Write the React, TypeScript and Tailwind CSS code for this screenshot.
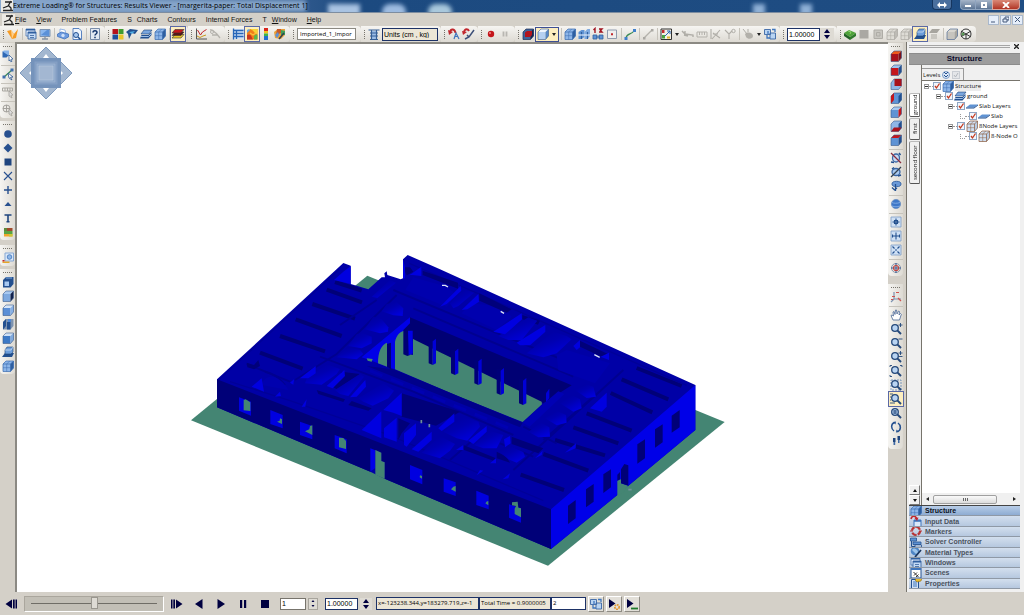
import type { ReactNode } from 'react';
import clsx from 'clsx';

/* ---------- Icons, all drawn on a 14 x 14 grid ---------- */

type Faces = { top?: string; front?: string; side?: string };

function Svg({ children }: { children: ReactNode }) {
  return (
    <svg viewBox="0 0 14 14" className="block h-[14px] w-[14px] shrink-0" fill="none" aria-hidden="true">
      {children}
    </svg>
  );
}

function Cube({ top = '#a9c9f0', front = '#5f93d4', side = '#23508f' }: Faces) {
  return (
    <Svg>
      <path d="M2 5 5 2h7.500L9.500 5z" fill={top} />
      <path d="M2 5h7.500v7.500H2z" fill={front} />
      <path d="M9.500 5l3-3v7l-3 3.500z" fill={side} />
      <path d="M2 5 5 2h7.500v7l-3 3.500H2z" stroke="#3a5a8c" strokeWidth=".6" />
    </Svg>
  );
}

function Wire({ color = '#3a6bb0', fill = '#bcd5f3', shade = '#2f5f9f' }: { color?: string; fill?: string; shade?: string }) {
  return (
    <Svg>
      <path d="M2 5 5 2h7.500v7l-3 3.500H2z" fill={fill} />
      <path d="M9.500 5l3-3v7l-3 3.500z" fill={shade} />
      <path d="M2 5 5 2h7.500v7l-3 3.500H2zM2 5h7.500v7.500M9.500 5l3-3" stroke={color} strokeWidth=".7" />
      <path d="M5.700 5v7.500M2 8.700h7.500M5.700 5l3-3" stroke={color} strokeWidth=".5" />
    </Svg>
  );
}

function Zoom({ mark, frame = false }: { mark?: string; frame?: boolean }) {
  return (
    <Svg>
      {frame && <path d="M2 2h10v10H2z" stroke="#5f86b5" strokeWidth=".8" strokeDasharray="2 1" />}
      <circle cx="6" cy="6" r="3.300" fill="#b9d4f2" stroke="#24487a" strokeWidth="1.300" />
      <path d="m8.600 8.600 3.400 3.400" stroke="#24487a" strokeWidth="2" />
      {mark && <path d={mark} stroke="#24487a" strokeWidth=".9" />}
    </Svg>
  );
}

function Target({ d }: { d: string }) {
  return (
    <Svg>
      <path d="M2 2h10v10H2z" fill="#cfe0f4" stroke="#7b9cc7" strokeWidth=".8" />
      <path d={d} stroke="#23508f" strokeWidth="1.100" />
    </Svg>
  );
}

const icons: Record<string, ReactNode> = {
  app: (
    <Svg>
      <path d="M0 1h13v12H0z" fill="#eceae5" />
      <path d="M2 11.500h10M2 9l5-2 3-5M4 3h7M7 6l3 3v3" stroke="#222" strokeWidth="1.300" />
    </Svg>
  ),
  open: (
    <Svg>
      <path d="m1 4 4-1 3 4 4-5-2 9-4 1z" fill="#f59a23" />
      <path d="m5 3 3 4-2 5z" fill="#ffd08a" />
    </Svg>
  ),
  windows: (
    <Svg>
      <path d="M2 2h9v7H2z" fill="#dfeafa" stroke="#4a76b3" strokeWidth=".8" />
      <path d="M4 5h8v7H4z" fill="#c3daf5" stroke="#2b5a9b" strokeWidth=".8" />
      <path d="M4 5h8v1.500H4zM2 2h9v1.500H2z" fill="#2f5f9f" />
      <path d="M6 8.500h4M6 10.500h4" stroke="#23508f" strokeWidth=".7" />
    </Svg>
  ),
  monitor: (
    <Svg>
      <path d="M2 2.500h10v7H2z" fill="#8bb7ee" stroke="#7d93b0" />
      <path d="m3 8 6-5h2v6z" fill="#5b91d8" />
      <path d="M4 12h6M7 9.500V12" stroke="#8592a3" strokeWidth="1.300" />
    </Svg>
  ),
  print: (
    <Svg>
      <path d="m4 2 5 1 1 4-6-1z" fill="#fff" stroke="#6d9be0" strokeWidth=".7" />
      <path d="m1.500 7 4-2 7 2v3l-4 2-7-2.500z" fill="#6d9be0" stroke="#3568b5" strokeWidth=".7" />
      <circle cx="7" cy="8.500" r="1.700" fill="#cfe0f8" />
    </Svg>
  ),
  preview: (
    <Svg>
      <path d="M3 1.500h6l2.500 2.500v8.500H3z" fill="#eef4fc" stroke="#3568b5" strokeWidth=".8" />
      <circle cx="6" cy="8" r="2.500" fill="#a9c9f0" stroke="#23508f" />
      <path d="m8 10 2.500 2.500" stroke="#23508f" strokeWidth="1.500" />
    </Svg>
  ),
  help: (
    <Svg>
      <path d="M2.500 1.500h9v11h-9z" fill="#e3e9f2" stroke="#5c7398" strokeWidth=".8" />
      <path d="M5 5.500C5 3 9 3 9 5.500c0 1.500-2 1.500-2 3M7 9.700v1.500" stroke="#14346b" strokeWidth="1.500" />
    </Svg>
  ),
  blocks: (
    <Svg>
      <path d="M1.500 2H7v5H1.500z" fill="#b5121b" />
      <path d="M7.500 2h5v5h-5z" fill="#3f9b2f" />
      <path d="M1.500 7.500H7v5H1.500z" fill="#1d4f9e" />
      <path d="M7.500 7.500h5v5h-5z" fill="#e9c52b" />
    </Svg>
  ),
  mesh: (
    <Svg>
      <path d="m1 5 4-3 8 1-3 4-3-1-3 6-1-5z" fill="#23508f" />
      <path d="m4 5 6-1-3 3z" fill="#4faee6" />
    </Svg>
  ),
  slabs: (
    <Svg>
      <path d="M1 11.500 2.500 8h7l3-3v3l-3 3.500z" fill="#23508f" />
      <path d="m2 7 3-4h8l-3 4z" fill="#7aa6de" stroke="#1d3f73" strokeWidth=".6" />
      <path d="M2 9.500h7.500l3-3" stroke="#a9c9f0" strokeWidth=".9" />
    </Svg>
  ),
  layers: (
    <Svg>
      <path d="m1 11 3-3.500h9L10 11z" fill="#e9c52b" stroke="#333" strokeWidth=".6" />
      <path d="m1 8.500 3-3.500h9l-3 3.500z" fill="#5a1416" stroke="#333" strokeWidth=".6" />
      <path d="m1 6 3-3.500h9L10 6z" fill="#c4161c" stroke="#333" strokeWidth=".6" />
    </Svg>
  ),
  chart: (
    <Svg>
      <path d="M2.500 1.500V12H13" stroke="#555" />
      <path d="m3.500 3 3 5 2-3 4-2.500" stroke="#c1272d" />
      <path d="m3 9 3 1.500L9 9l3-1" stroke="#c99a1e" />
    </Svg>
  ),
  grayCurve: (
    <Svg>
      <path d="M2 3c4-1 4 3 6 3M4 8h6M8 6l4 5" stroke="#b4b2ac" strokeWidth="1.300" />
      <circle cx="4" cy="5" r="1.500" stroke="#b4b2ac" />
    </Svg>
  ),
  grid: (
    <Svg>
      <path d="M3 2h10v10H3z" fill="#cfe0f4" />
      <path d="M2.500 1.500v11M2 3.500h10.500M2 6.500h10.500M2 9.500h10.500M5.500 3v9" stroke="#2766b8" strokeWidth="1.300" />
    </Svg>
  ),
  contour: (
    <Svg>
      <path d="M2 5l3-3h7.500v10.500H2z" fill="#f07d1a" />
      <path d="M5 2h7.500v5C9 7 10 4 5 2z" fill="#f7d435" />
      <path d="M2 8c4-2 4.500 2 6 4.500H2z" fill="#c8381f" />
      <path d="M9 9.500c1-2 2-2 3.500-2v5H9z" fill="#58b84a" />
      <path d="M2 3l2-1 1 1-3 3z" fill="#62a8e6" />
      <path d="m5 6 3 2 3-2" stroke="#f9c23a" strokeWidth="1.200" />
    </Svg>
  ),
  legend: (
    <Svg>
      <path d="M5 1h4v3H5z" fill="#d9261c" />
      <path d="M5 4h4v2.500H5z" fill="#f2c21a" />
      <path d="M5 6.500h4V9H5z" fill="#3bb54a" />
      <path d="M5 9h4v4H5z" fill="#1f6fd0" />
    </Svg>
  ),
  contourEdit: (
    <Svg>
      <path d="m1 5 4-3 7 0v6l-4 4-6-1z" fill="#e8a13a" />
      <path d="M4 2h4v4L3 8z" fill="#c65a2a" />
      <path d="m8 3 4 1v4L8 8z" fill="#42a05a" />
      <path d="M2 8l3-3 1 3-2 3z" fill="#5b91d8" />
      <path d="m6 12 5-6" stroke="#33414f" strokeWidth="1.500" />
    </Svg>
  ),
  table: (
    <Svg>
      <path d="M4 4h6v8H4z" fill="#9dbfe8" />
      <path d="M1.500 3h11M3 6h8M3 9h8M4.500 3v9.500M9.500 3v9.500M3 12.500h8" stroke="#355f96" strokeWidth="1.200" />
    </Svg>
  ),
  undoMark: (
    <Svg>
      <path d="M3 5c1-4 5-3 5.500 1" stroke="#c1272d" strokeWidth="2" />
      <path d="m1 3 1 5 4-3z" fill="#c1272d" />
      <path d="m7 12 2-6 3 6M8 9.500h3" stroke="#3f76bd" strokeWidth="1.200" />
    </Svg>
  ),
  undoLine: (
    <Svg>
      <path d="M3 5c1-4 4-3 5-1" stroke="#c1272d" strokeWidth="2" />
      <path d="m4 12 4-2 5-7M6 8l2 2" stroke="#3c4f78" strokeWidth="1.500" />
      <path d="m1 4 1 4 4-3z" fill="#c1272d" />
    </Svg>
  ),
  record: (
    <Svg>
      <circle cx="7" cy="7" r="3.200" fill="#c4161c" />
      <circle cx="6" cy="6" r="1" fill="#ef8a8d" />
    </Svg>
  ),
  pauseGray: (
    <Svg>
      <path d="M5.500 4.500v5M8.500 4.500v5" stroke="#b8b6b1" strokeWidth="1.800" />
    </Svg>
  ),
  redCube: (
    <Svg>
      <path d="M2 5 5 2h7.500v7l-3 3.500H2z" fill="#3f659b" />
      <path d="M9.500 5l3-3v7l-3 3.500z" fill="#16264c" />
      <path d="M4 5.500 6 4h5v4L9 10H4z" fill="#b3141c" />
      <path d="M2 5 5 2h7.500v7l-3 3.500H2z" stroke="#1d2f56" strokeWidth=".7" />
    </Svg>
  ),
  cubeLight: <Cube top="#eef5fd" front="#b5d0f1" side="#5687c6" />,
  cubeGrid: <Wire fill="#8db6e9" />,
  cubeSplit: (
    <Svg>
      <path d="m1.500 5 3-2h3v7l-3 2h-3z" fill="#5f93d4" />
      <path d="m7.500 5 3-3h2.500v7l-2.500 3h-3z" fill="#7faae0" />
      <path d="M4.500 5v7M10.500 5v7" stroke="#2f5f9f" strokeWidth="1.200" />
      <path d="M1 8h12" stroke="#dbe8f8" strokeWidth="1.200" />
    </Svg>
  ),
  numbers: (
    <Svg>
      <path d="m2.500 3 1.500-1.500V6M8 2h3L9.500 3.500 11 5H8" stroke="#a11520" strokeWidth="1.400" />
      <path d="M2 8h4v4H2zM8 8h4v4H8z" fill="#5f93d4" stroke="#2f5f9f" strokeWidth=".8" />
      <path d="M5 10h4" stroke="#2f5f9f" />
    </Svg>
  ),
  dotFrame: (
    <Svg>
      <path d="M2.500 3h9v8.500h-9z" fill="#eee" stroke="#8592a8" strokeWidth=".9" />
      <path d="M6 6.200h2v2H6z" fill="#c1272d" />
    </Svg>
  ),
  line: (
    <Svg>
      <path d="M3 11c1-5 5-3 8-7" stroke="#3a8a55" strokeWidth="1.200" />
      <path d="M1.500 10h3v3h-3zM10 2h3v3h-3z" fill="#3f7fcb" />
    </Svg>
  ),
  lineGray: (
    <Svg>
      <path d="m3 11 8-8" stroke="#b4b2ac" strokeWidth="1.200" />
      <path d="M2 10h2.500v2.500H2zM10 2h2.500v2.500H10z" fill="#aaa8a3" />
    </Svg>
  ),
  select: (
    <Svg>
      <path d="M2 2h10.500v10.500H2z" fill="#f2efe4" stroke="#333" strokeWidth="1" />
      <path d="m6 9 5-5M8 4h3v3" stroke="#2464b5" />
      <path d="M3 3h2.500v3H3z" fill="#c1272d" />
      <path d="M3 8h3v3.500H3z" fill="#4aa23e" />
      <path d="M8 9.500h3v2H8z" fill="#e2b52b" />
    </Svg>
  ),
  grayBeam: (
    <Svg>
      <path d="m1 4 3 3 8 1v2M3 8l4 1M4 4v3" stroke="#b0aea8" strokeWidth="1.400" />
    </Svg>
  ),
  grayRuler: (
    <Svg>
      <path d="M2 5h10v5H2zM4.500 5v3M7 5v3M9.500 5v3" stroke="#b4b2ac" />
    </Svg>
  ),
  grayAxes: (
    <Svg>
      <path d="M2 2v10M3 12l8-9M4 6l7 5M4 7h5" stroke="#b0aea8" strokeWidth="1.100" />
    </Svg>
  ),
  grayFork: (
    <Svg>
      <path d="m2 3 4 4v5M6 7l3-3" stroke="#b0aea8" strokeWidth="1.100" />
      <circle cx="10.500" cy="4" r="1.700" stroke="#b0aea8" />
    </Svg>
  ),
  grayMouse: (
    <Svg>
      <path d="M4 7c3-3 8-1 8 2 0 3-5 4-7 1z" fill="#b2b0aa" />
      <path d="M2 2l4 5M7 2v3" stroke="#aeaca6" />
    </Svg>
  ),
  linkWin: (
    <Svg>
      <path d="M1.500 2.500h6v5h-6zM7 6h5.500v6H7z" fill="#b9d4f2" stroke="#3a67a5" strokeWidth=".9" />
      <path d="M4 8v3h3M5 4v3M9 2.500h3V5" stroke="#3f76bd" strokeWidth="1.300" />
    </Svg>
  ),
  ground: (
    <Svg>
      <path d="m1 6 5-3 7 3-6 4z" fill="#4fa33a" />
      <path d="m1 6 6 4v3L1 9z" fill="#236327" />
      <path d="m7 10 6-4v3l-6 4z" fill="#2f7a2c" />
      <path d="m5 4 3 1-1 2" stroke="#8fd06f" />
    </Svg>
  ),
  graySolid: (
    <Svg>
      <path d="M2.500 3h9v8.500h-9z" fill="#aaa8a3" />
    </Svg>
  ),
  grayBox: (
    <Svg>
      <path d="M3 3h8.500v8.500H3zM5.500 5.500H9V9H5.500z" fill="#c8c6c0" stroke="#aeaca6" />
    </Svg>
  ),
  grayCube: <Wire color="#aaa8a2" fill="#dedcd6" shade="#bdbbb5" />,
  grayCubeSolid: <Cube top="#d8d6d0" front="#c6c4be" side="#a7a59f" />,
  plane: (
    <Svg>
      <path d="m1 12 3-4h9l-2 4z" fill="#23508f" />
      <path d="M4 5 6 2h6v5l-2 2H4z" fill="#6d9edb" stroke="#1d3f73" strokeWidth=".6" />
      <path d="M4 5h6l2-3" stroke="#d7e6f8" strokeWidth=".7" />
    </Svg>
  ),
  grayPlane: (
    <Svg>
      <path d="m2 6 3-4h8l-3 4z" fill="#a7a59f" />
      <path d="M4 7h6v5H4z" fill="#c8c6c0" />
    </Svg>
  ),
  globeDark: (
    <Svg>
      <circle cx="7" cy="7" r="5" fill="#eee" stroke="#333" />
      <path d="m2 4 5 3 5-3M7 7v5M2 9.500 7 7l5 3" stroke="#333" strokeWidth="1" />
      <circle cx="4" cy="7" r="1.500" fill="#5b9b58" />
    </Svg>
  ),
  pickNode: (
    <Svg>
      <path d="M1.500 2.500h6v4l-2 2h-4z" fill="#2e68b5" />
      <path d="M1.500 2.500 3 1.500h5l-.500 5" fill="#84b1e8" />
      <path d="m8 6 4 4-2 .300 1 2-1.200.500-.800-2L8 12z" fill="#fff" stroke="#23508f" strokeWidth=".7" />
    </Svg>
  ),
  pickLine: (
    <Svg>
      <path d="m3 10 8-7" stroke="#3a8a55" strokeWidth="1.200" />
      <path d="M1.500 8.500h3v3h-3zM9.500 1.500h3v3h-3z" fill="#3f6fae" />
      <path d="m7 6 5 4-2.500.300L11 13l-3-2z" fill="#fff" stroke="#23508f" strokeWidth=".8" />
    </Svg>
  ),
  pickGray: (
    <Svg>
      <path d="M1.500 3h10v3h-10zM4 3v3M6.500 3v3M9 3v3" stroke="#aaa8a2" />
      <path d="m8 6 4 4-2 .300L11 13l-3-2z" fill="#ddd" stroke="#a3a19c" strokeWidth=".8" />
    </Svg>
  ),
  pickRound: (
    <Svg>
      <circle cx="5.500" cy="5.500" r="3.500" stroke="#a3a19c" />
      <path d="M2 5.500h7M5.500 2v7" stroke="#a3a19c" />
      <path d="m8 6 4 4-2 .300L11 13l-3-2z" fill="#ddd" stroke="#a3a19c" strokeWidth=".8" />
    </Svg>
  ),
  circle: (
    <Svg>
      <circle cx="7" cy="7" r="3.800" fill="#27508f" />
    </Svg>
  ),
  diamond: (
    <Svg>
      <path d="m7 2.500 4.500 4.500L7 11.500 2.500 7z" fill="#27508f" />
    </Svg>
  ),
  square: (
    <Svg>
      <path d="M3.500 3.500h7v7h-7z" fill="#1f457f" />
    </Svg>
  ),
  cross: (
    <Svg>
      <path d="m3 3 8 8M11 3l-8 8" stroke="#27508f" strokeWidth="1.100" />
    </Svg>
  ),
  plus: (
    <Svg>
      <path d="M7 3v8M3 7h8" stroke="#27508f" strokeWidth="1.400" />
    </Svg>
  ),
  triangle: (
    <Svg>
      <path d="m7 5 3.500 4h-7z" fill="#27508f" />
    </Svg>
  ),
  textTool: (
    <Svg>
      <path d="M3.500 4h7M7 4v7M5.500 10.700h3" stroke="#1f457f" strokeWidth="1.600" />
    </Svg>
  ),
  palette: (
    <Svg>
      <path d="M3 3h8.500v3H3z" fill="#a04a2c" />
      <path d="M3 6h8.500v3H3z" fill="#59a344" />
      <path d="M3 9h8.500v2.500H3z" fill="#f0a72c" />
      <path d="M3 3h3v3H3z" fill="#5e8a3c" />
      <path d="M8 9h3.500v2.500H8z" fill="#c8c93a" />
    </Svg>
  ),
  capture: (
    <Svg>
      <path d="M4 2h8.500v8H4z" fill="#dbe8f8" stroke="#86a8d4" />
      <circle cx="8.500" cy="6" r="2.300" fill="#8fb6e6" stroke="#3f76bd" strokeWidth=".8" />
      <path d="M1.500 10.500h7v1.500h-7z" fill="#e5a52b" />
      <path d="M1.500 9h2v1.500h-2z" fill="#c1272d" />
    </Svg>
  ),
  viewTop: (
    <Svg>
      <path d="M2 5 5 2h7.500v7l-3 3.500H2z" fill="#24508f" />
      <path d="M3.500 6.500H8V11H3.500z" fill="#a9c9f0" />
      <path d="M5 3h6" stroke="#7faae0" />
    </Svg>
  ),
  viewFront: <Cube front="#7ea9df" top="#a9c9f0" side="#12224d" />,
  viewBack: <Cube front="#5b8fd6" top="#d7e6f8" side="#88b1e6" />,
  viewLeft: (
    <Svg>
      <path d="M2 5 5 2h7.500v7l-3 3.500H2z" fill="#7d93b0" />
      <path d="m2 5 3-3v7l-3 3.500zM6 5h3.500v7.500H6z" fill="#23508f" />
      <path d="M7 2h3v3H7z" fill="#4e88d6" />
    </Svg>
  ),
  viewBottom: <Cube front="#3d79c6" top="#cfe0f5" side="#7fa9dd" />,
  redTop: <Cube top="#ef5a1c" front="#a8121b" side="#7d101a" />,
  redFront: <Cube top="#9fc3ee" front="#c4161c" side="#23508f" />,
  redBack: (
    <Svg>
      <path d="M2 6 5 2h7.500v7l-3 3.500H2z" fill="#8fb6e6" stroke="#3a5a8c" strokeWidth=".6" />
      <path d="M5.500 2h7v7h-7z" fill="#a8121b" />
    </Svg>
  ),
  redLeft: (
    <Svg>
      <path d="M2 5 5 2h7.500v7l-3 3.500H2z" fill="#5f93d4" stroke="#3a5a8c" strokeWidth=".6" />
      <path d="m2 5 3-3v7l-3 3.500z" fill="#c4161c" />
      <path d="M9.500 5l3-3v7l-3 3.500z" fill="#23508f" />
    </Svg>
  ),
  redRight: <Cube side="#c4161c" />,
  redBottom: (
    <Svg>
      <path d="M2 5 5 2h7.500v7l-3 3.500H2z" fill="#8fb6e6" stroke="#3a5a8c" strokeWidth=".6" />
      <path d="M9.500 5l3-3v7l-3 3.500z" fill="#23508f" />
      <path d="m2 12.500 3-4h7.500l-3 4z" fill="#a8121b" />
    </Svg>
  ),
  redLid: <Cube top="#c4161c" />,
  rotX: (
    <Svg>
      <ellipse cx="7" cy="7" rx="3.500" ry="4" fill="#c7daf3" stroke="#3a67a5" strokeWidth="1.300" />
      <path d="m2 2 10 10" stroke="#8b2b3c" strokeWidth="1.200" />
      <path d="m2 11 3 .500M10 2l1.500 2" stroke="#23508f" strokeWidth="1.500" />
    </Svg>
  ),
  rotY: (
    <Svg>
      <ellipse cx="7" cy="7" rx="4" ry="3.500" fill="#a9c9f0" stroke="#3a67a5" strokeWidth="1.300" />
      <path d="M2 12 12 2" stroke="#33414f" strokeWidth="1.200" />
      <path d="m3 4 2-1.500M9 11l3-1" stroke="#23508f" strokeWidth="1.500" />
    </Svg>
  ),
  rotZ: (
    <Svg>
      <ellipse cx="7.500" cy="5" rx="4.500" ry="2.700" fill="#6a99d8" stroke="#3a67a5" />
      <path d="M6.500 5v7M3 8.500 5.500 11 8 9" stroke="#23508f" strokeWidth="1.300" />
    </Svg>
  ),
  globe: (
    <Svg>
      <circle cx="7" cy="7" r="4.600" fill="#3f78c8" stroke="#6c8fc0" strokeWidth=".8" />
      <path d="M3 5.500c2 1 5 1 8 0M3 9c3 1 5 1 8 0" stroke="#8db5ea" strokeWidth=".8" />
    </Svg>
  ),
  centerH: <Target d="M3.500 7h7M7 3.500v7M5.500 5.500h3v3h-3z" />,
  centerV: <Target d="M7 3.500v7M4 7h6M3.500 5.500v3M10.500 5.500v3" />,
  centerFit: <Target d="m3.500 3.500 2 2M10.500 3.500l-2 2M3.500 10.500l2-2M10.500 10.500l-2-2M6 7h2" />,
  orbit: (
    <Svg>
      <circle cx="7" cy="7" r="4.500" stroke="#8a97aa" />
      <path d="M7 2v10M2 7h10" stroke="#3f6299" strokeWidth="1.100" />
      <circle cx="7" cy="7" r="2.500" stroke="#c1443f" strokeWidth="1.200" />
    </Svg>
  ),
  axes: (
    <Svg>
      <path d="M5 9V2M5 9h7M5 9l-3 3" stroke="#7d93b0" strokeWidth="1.200" />
      <path d="M7 2.500h3M3 6.500h3M2 9.500h2M9 8l3 3" stroke="#d0524d" strokeWidth="1.200" />
    </Svg>
  ),
  hand: (
    <Svg>
      <path d="M4 12 2 7.500l1-.500 1.500 1L4 4l1-.500L6 6.500 6.500 2l1 0L8 6l1.500-3 1 .500L10 7l1.500-1.500.800.800L10.500 12z" fill="#fff" stroke="#4a6796" strokeWidth=".8" />
    </Svg>
  ),
  zoomIn: <Zoom mark="M9.500 3h4M11.500 1v4" />,
  zoomOut: <Zoom mark="M9.500 3h4" />,
  zoomBoth: <Zoom mark="M9.500 3h4M11.500 1v4M9.500 6.500h4" />,
  zoomCorner: <Zoom mark="M1 3V1.500h2M11 1.500h2V3M1 11v1.500h2" />,
  zoomFit: <Zoom frame />,
  zoomWin: <Zoom mark="M1 2h3M1 5h1M1 8h1M1 11h5" />,
  zoomIcon: <Zoom mark="M4 5h4M4 7h4M6 4v4" />,
  refresh: (
    <Svg>
      <path d="M5.500 2.500C1.500 4 2 9 5 11M8.500 11.500c4-1.500 3.500-6.500.500-8.500" stroke="#23508f" strokeWidth="1.500" />
      <path d="m4 2 3-.500L6.500 4.500zM10 12l-3 .500.500-3z" fill="#23508f" />
    </Svg>
  ),
  walk: (
    <Svg>
      <path d="M4 4h2.500v4H4zM8.500 2H11v4H8.500z" fill="#1f457f" />
      <path d="M4.500 8h1.700v3H4.500zM9 6h1.500v3H9z" fill="#3f6aa5" />
    </Svg>
  ),
  slab: (
    <Svg>
      <path d="m1 8.500 4-3h8l-4 3z" fill="#5f93d4" />
      <path d="M1 8.500h8l4-3v1l-4 3H1z" fill="#23508f" />
    </Svg>
  ),
  brownCube: <Wire color="#8a5a3c" fill="#cfdff2" shade="#b9cce4" />,
  input: (
    <Svg>
      <path d="M5 6h7v6.500H5z" fill="#dce9f8" stroke="#3f76bd" />
      <path d="M5 6h7v1.800H5z" fill="#3f76bd" />
      <path d="M2 5c1-4 5-3 5.500-.500" stroke="#c1272d" strokeWidth="1.600" />
      <path d="m5.500 4 4-.500L8 7z" fill="#c1272d" />
    </Svg>
  ),
  markers: (
    <Svg>
      <circle cx="7" cy="7" r="4" stroke="#b83434" strokeWidth="2.200" strokeDasharray="4.300 2" />
      <path d="M7 1v3M7 10v3M1 7h3M10 7h3" stroke="#b83434" strokeWidth="1.200" />
    </Svg>
  ),
  solver: (
    <Svg>
      <path d="M1.500 3h6v3h-6zM4 7h8v2.500H4z" fill="#5f93d4" stroke="#23508f" strokeWidth=".8" />
      <path d="M6 10h6.500v2H6z" fill="#fff" stroke="#23508f" strokeWidth=".8" />
      <path d="M2.500 6v5.500H6" stroke="#23508f" />
    </Svg>
  ),
  material: (
    <Svg>
      <circle cx="6" cy="6" r="4.300" fill="#4f86c6" />
      <path d="M3 5c2-3 4-1 5 0s2 3-1 4z" fill="#9cc4ea" />
      <path d="m6 12 6-7" stroke="#1b365d" strokeWidth="1.700" />
    </Svg>
  ),
  scenes: (
    <Svg>
      <path d="M2 2h10v10H2z" fill="#fff" stroke="#23508f" />
      <path d="M2 2h10v2H2z" fill="#3f76bd" />
      <path d="m4.500 6 5 5M5 9.500l3-3M7 11l2.500-2.500" stroke="#333" />
    </Svg>
  ),
  properties: (
    <Svg>
      <path d="M2.500 3.500h7v9h-7z" fill="#cfe0f4" stroke="#23508f" />
      <path d="M4 6h4M4 8h4M4 10h4" stroke="#3f76bd" />
      <path d="m6 4 3-3 4 1-1 3-4 1z" fill="#e9b92b" stroke="#8d6b14" strokeWidth=".6" />
    </Svg>
  ),
  stepBack: (
    <Svg>
      <path d="M1.500 7 8 2.500v9zM9 2.500h1.700v9H9zM11.500 2.500H13v9h-1.500z" fill="#000040" />
    </Svg>
  ),
  stepForward: (
    <Svg>
      <path d="M12.500 7 6 2.500v9zM3.300 2.500H5v9H3.300zM1 2.500h1.500v9H1z" fill="#000040" />
    </Svg>
  ),
  playBack: (
    <Svg>
      <path d="M3 7l7.500-5v10z" fill="#000040" />
    </Svg>
  ),
  play: (
    <Svg>
      <path d="M11 7 3.500 2v10z" fill="#000040" />
    </Svg>
  ),
  pause: (
    <Svg>
      <path d="M4 3h2.200v8H4zM8 3h2.200v8H8z" fill="#000040" />
    </Svg>
  ),
  stop: (
    <Svg>
      <path d="M3 3h8v8H3z" fill="#000040" />
    </Svg>
  ),
  playGear: (
    <Svg>
      <path d="M8.500 6.500 2 2v9z" fill="#000040" />
      <circle cx="10" cy="10" r="2.200" stroke="#e0932a" strokeWidth="1.600" strokeDasharray="1.600 .7" />
    </Svg>
  ),
  playLine: (
    <Svg>
      <path d="M8.500 6.500 2 2v9z" fill="#000040" />
      <path d="M6 11.500h7" stroke="#1f7a2c" strokeWidth="1.800" />
    </Svg>
  ),
};

/* ---------- Toolbar pieces ---------- */

function ToolButton({ name, active = false }: { name: string; active?: boolean }) {
  return (
    <button
      type="button"
      aria-label={name}
      className={clsx(
        'flex h-[14px] w-[14px] shrink-0 items-center justify-center overflow-hidden',
        active && 'bg-[#fdeebf] outline outline-1 outline-[#5a69a6]'
      )}
    >
      {icons[name]}
    </button>
  );
}

function DropArrow() {
  return (
    <button type="button" aria-label="More options" className="flex h-[14px] w-2 shrink-0 items-center justify-center">
      <svg viewBox="0 0 4 3" className="h-[3px] w-1" aria-hidden="true">
        <path d="M0 0h4L2 3z" fill="#222" />
      </svg>
    </button>
  );
}

// "|" is a separator, "v" a drop-down arrow, a leading "*" marks the pressed button
function Tools({ list, vertical = false }: { list: string; vertical?: boolean }) {
  return (
    <>
      {list.split(' ').map((item, i) => {
        if (item === '|') {
          return vertical ? (
            <span key={i} className="flex h-1 w-[14px] shrink-0 items-center">
              <span className="h-px w-full bg-[#c6c3bb]" />
            </span>
          ) : (
            <span key={i} className="flex h-3 w-1 shrink-0 justify-center">
              <span className="h-full w-px bg-[#c6c3bb]" />
            </span>
          );
        }
        if (item === 'v') return <DropArrow key={i} />;
        const active = item.startsWith('*');
        return <ToolButton key={i} name={active ? item.slice(1) : item} active={active} />;
      })}
    </>
  );
}

function Group({ children }: { children: ReactNode }) {
  return (
    <div className="flex h-4 shrink-0 items-center rounded-r-sm bg-linear-to-b from-[#f6f5f2] to-[#dddad3] pr-[3px]">
      <span className="flex w-[6px] justify-center">
        <span className="h-[9px] border-l border-dotted border-[#77746c]" />
      </span>
      {children}
    </div>
  );
}

function SideGroup({ list, className }: { list: string; className?: string }) {
  return (
    <div
      className={clsx(
        'flex w-[15px] shrink-0 flex-col items-center rounded-b-sm bg-linear-to-r from-[#f6f5f2] to-[#dddad3] pb-px',
        className
      )}
    >
      <span className="flex h-[6px] w-[9px] items-center">
        <span className="w-full border-t border-dotted border-[#77746c]" />
      </span>
      <Tools list={list} vertical />
    </div>
  );
}

function UpDown({ label, className }: { label: string; className?: string }) {
  return (
    <div className={clsx('flex h-3 shrink-0 flex-col bg-[#dedbd4]', className)}>
      <button type="button" aria-label={`Increase ${label}`} className="flex flex-1 items-center justify-center">
        <svg viewBox="0 0 6 4" className="h-1 w-[6px]" aria-hidden="true">
          <path d="m3 0 3 4H0z" fill="#000040" />
        </svg>
      </button>
      <button type="button" aria-label={`Decrease ${label}`} className="flex flex-1 items-center justify-center">
        <svg viewBox="0 0 6 4" className="h-1 w-[6px]" aria-hidden="true">
          <path d="m3 4 3-4H0z" fill="#000040" />
        </svg>
      </button>
    </div>
  );
}

/* ---------- Window chrome ---------- */

function TitleBar() {
  return (
    <header className="relative flex h-[13px] shrink-0 items-center overflow-hidden border-b border-[#7d8da0] bg-linear-to-r from-[#8facd0] via-[#1c4a80] via-35% to-[#1f4d83] pl-px">
      <div className="absolute inset-0 blur-[2px]" aria-hidden="true">
        <span className="absolute top-0 left-0 h-3 w-[306px] bg-[#86a5ca]" />
        <span className="absolute top-1 left-[328px] h-3 w-8 bg-[#a9c3e2]" />
        <span className="absolute top-1 left-[382px] h-4 w-6 rounded-full bg-[#9dbbe0]" />
        <span className="absolute top-1 left-[428px] h-4 w-6 rounded-full bg-[#a9c8dc]" />
        <span className="absolute top-1 left-[753px] h-3 w-3 bg-[#8fb0d6]" />
        <span className="absolute top-1 left-[800px] h-3 w-3 bg-[#8fb0d6]" />
      </div>
      <div className="relative flex h-3 w-3 items-center overflow-hidden">{icons.app}</div>
      <h1 className="relative flex-1 font-['Open_Sans',sans-serif] text-[7px] leading-3 whitespace-nowrap text-black">
        Extreme Loading® for Structures: Results Viewer - [margerita-paper: Total Displacement 1]
      </h1>
      <div className="relative flex h-full items-start pr-1 text-white">
        <button type="button" aria-label="Move window" className="mr-2 flex h-[10px] w-5 items-center justify-center rounded-b-sm border border-t-0 border-[#16365f] bg-[#4a6f9e]">
          <svg viewBox="0 0 10 6" className="h-[6px] w-[10px]" fill="#fff" aria-hidden="true">
            <path d="M0 3l3-3v2h4V0l3 3-3 3V4H3v2z" />
          </svg>
        </button>
        <button type="button" aria-label="Minimize" className="flex h-[10px] w-4 items-end justify-center rounded-bl-sm border border-t-0 border-[#8fa4bf] bg-linear-to-b from-[#a5b4c8] to-[#5e7695]">
          <span className="mb-[2px] h-[2px] w-[6px] bg-white" />
        </button>
        <button type="button" aria-label="Restore" className="flex h-[10px] w-4 items-center justify-center border-b border-[#8fa4bf] bg-linear-to-b from-[#a5b4c8] to-[#5e7695]">
          <span className="h-[6px] w-[6px] border-2 border-white" />
        </button>
        <button type="button" aria-label="Close" className="flex h-[10px] w-7 items-center justify-center rounded-br-sm border border-t-0 border-[#d9a79e] bg-linear-to-b from-[#d98877] to-[#b03324]">
          <svg viewBox="0 0 8 6" className="h-[6px] w-2" stroke="#fff" strokeWidth="1.800" aria-hidden="true">
            <path d="m1 0 6 6M7 0 1 6" />
          </svg>
        </button>
      </div>
    </header>
  );
}

const menus = [
  { key: 'F', rest: 'ile' },
  { key: 'V', rest: 'iew' },
  { rest: 'Problem Features' },
  { pre: 'S', rest: 'Charts' },
  { rest: 'Contours' },
  { rest: 'Internal Forces' },
  { pre: 'T', key: 'W', rest: 'indow' },
  { key: 'H', rest: 'elp' },
];

function MenuBar() {
  return (
    <nav className="flex h-[13px] shrink-0 items-center pl-[2px] text-[7px] leading-3 text-[#111]">
      <span className="flex h-3 w-[13px] items-center">{icons.app}</span>
      <div className="flex flex-1 gap-[10px]">
        {menus.map((menu) => (
          <button key={menu.rest} type="button" className="flex whitespace-nowrap">
            {menu.pre && <span className="mr-[5px]">{menu.pre}</span>}
            {menu.key && <span className="underline">{menu.key}</span>}
            {menu.rest}
          </button>
        ))}
      </div>
      <div className="flex gap-px pr-px">
        {['M1 6h4', 'M1 3h4v3H1zM3 3V1h4v3H5', 'm1 1 5 5M6 1 1 6'].map((d) => (
          <button key={d} type="button" aria-label="Child window control" className="flex h-[10px] w-[11px] items-center justify-center border border-[#a9b8cc] bg-[#e6eefa]">
            <svg viewBox="0 0 7 7" className="h-[7px] w-[7px]" fill="none" stroke="#44597a" aria-hidden="true">
              <path d={d} />
            </svg>
          </button>
        ))}
      </div>
    </nav>
  );
}

function TopToolbar() {
  return (
    <div className="flex h-4 shrink-0 items-center overflow-hidden">
      <Group>
        <Tools list="open | windows monitor | print preview | help" />
      </Group>
      <Group>
        <Tools list="blocks mesh slabs cubeGrid | *layers" />
      </Group>
      <Group>
        <Tools list="chart grayCurve" />
      </Group>
      <Group>
        <Tools list="grid *contour legend contourEdit" />
      </Group>
      <Group>
        <input
          aria-label="Load stage"
          defaultValue="Imported_1_Impor"
          className="mr-[2px] ml-px h-3 w-[59px] border border-[#8b8982] bg-white px-[2px] font-['Open_Sans',sans-serif] text-[6px] text-black"
        />
      </Group>
      <Group>
        <Tools list="table" />
        <input
          aria-label="Units"
          readOnly
          value="Units (cm , kg)"
          className="ml-px h-[13px] w-14 border border-[#1d3266] bg-[#ece6d6] px-px text-[7px] text-black"
        />
      </Group>
      <Group>
        <Tools list="undoMark undoLine" />
      </Group>
      <Group>
        <Tools list="record pauseGray" />
      </Group>
      <Group>
        <Tools list="redCube" />
        <div className="flex h-[15px] w-6 items-center border border-[#3d4f94] bg-[#fdeebf]">
          <ToolButton name="cubeLight" />
          <span className="h-full w-px bg-[#3d4f94]" />
          <DropArrow />
        </div>
        <Tools list="| cubeGrid cubeSplit numbers dotFrame | line | lineGray | select v grayBeam grayRuler grayAxes grayFork | grayMouse v linkWin" />
      </Group>
      <Group>
        <input
          aria-label="Scale factor"
          defaultValue="1.00000"
          className="ml-px h-[13px] w-[33px] border border-[#1d3266] bg-white px-px text-[7px] text-black"
        />
        <UpDown label="scale factor" className="w-[14px]" />
      </Group>
      <Group>
        <Tools list="ground graySolid grayBox grayCube grayCube *plane grayPlane | grayCubeSolid globeDark" />
      </Group>
    </div>
  );
}

/* ---------- 3D model ---------- */

const roofStrips = [
  'M465 126l80 26', 'M440 149l106 38', 'M397 192l128 44', 'M347 238l138 50', 'M300 288l135 46', 'M240 338l128 48',
  'M1370 384l135 54', 'M1325 418l140 60', 'M1292 459l125 58', 'M1220 520l135 52', 'M1180 562l135 48',
  'M1125 600l150 46', 'M1090 642l135 50', 'M1022 704l130 46',
];

// curved vaults, shaded from the crown down to the lit edge
const vaults = [
  '490,334 505,322 540,330 550,342 530,358 470,352',
  '530,283 545,278 575,290 575,310 545,325 505,318',
  '580,230 605,238 625,262 624,275 600,280 555,268',
  '620,192 650,186 670,205 668,228 640,226 605,214',
  '380,415 440,373 480,387 470,402 425,434 375,430',
  '465,450 540,402 552,410 505,468 480,462',
  '535,475 610,430 642,452 625,475 578,497 550,485',
  '575,170 630,120 648,128 592,174',
  '725,638 780,588 825,612 810,632 780,655',
  '790,575 850,530 895,545 900,560 862,602 830,595',
  '882,615 930,572 970,585 950,625 910,625',
  '955,632 985,615 1030,636 1035,650 1010,668 985,658',
  '810,190 850,148 882,158 835,198 820,205',
  '955,288 1045,232 1072,242 1025,300 985,300',
  '1040,340 1120,275 1160,288 1175,298 1130,340 1090,352',
  '1185,450 1215,432 1240,440 1248,470 1220,474',
  '1140,490 1175,465 1200,478 1205,505 1180,515',
  '1095,535 1130,512 1158,525 1160,548 1130,556',
  '1045,575 1082,548 1108,562 1110,590 1075,592',
];

// upright wall faces that catch the light
const litWalls = [
  '490,95 512,78 512,132 462,120',
  '440,438 493,390 495,408 458,445',
  '510,472 556,420 558,440 530,470',
  '610,510 665,458 665,528 640,518',
  '545,570 604,514 604,595',
  '612,565 650,533 650,605 612,592',
  '672,580 708,550 708,585 680,620 672,615',
  '695,628 755,575 755,600 715,635',
  '775,565 823,520 823,545 785,573',
  '865,602 920,558 920,575 880,612',
  '360,415 407,378 407,400 385,415',
  '672,118 724,80 724,108 690,104',
  '780,200 842,138 844,152 800,192',
  '845,210 895,162 897,185 862,208',
  '940,275 1025,220 1026,238 975,283',
  '1010,308 1096,255 1096,275 1050,316 1020,316',
  '1180,318 1200,300 1200,322 1190,330',
  '1262,350 1287,338 1287,360',
  '1230,505 1280,458 1280,500 1265,515',
  '972,598 990,588 992,610 975,622',
  '300,455 303,468 285,470',
  '215,440 245,415 252,455',
  '330,428 342,418 340,434',
  '365,500 380,478 376,500',
  '900,690 910,692 890,706',
  '828,630 850,615 850,630',
  '968,718 990,700 985,715',
  '930,670 948,655 948,670',
  '1065,655 1088,632 1085,645',
  '1155,638 1188,610 1187,625',
];

const darkPieces = [
  '675,82 690,82 700,95 680,106 675,95',
  '728,92 834,128 834,146 728,105',
  '898,160 995,208 980,218 898,182',
  '1027,225 1080,242 1074,254 1027,238',
  '1200,302 1290,345 1264,350 1200,320',
  '665,460 840,515 768,557 665,530',
  '515,483 575,505 565,512 505,495',
  '410,450 495,478 490,486 415,462',
  '850,615 948,655 940,662 852,630',
  '995,590 1090,625 1075,640 995,612',
  '950,635 980,650 990,668 950,655',
  '655,535 690,550 665,580 655,600',
  '485,395 540,402 470,448 460,442',
  '200,368 222,375 235,360 240,378 222,388 202,382',
];

const frontWindows = [
  { hole: '177,472 213,485 213,527 177,512', view: '191,480 197,478 211,487 211,513 191,511' },
  { hole: '271,510 308,525 308,565 271,552', view: '291,545 299,542 300,535 306,538 306,552' },
  { hole: '360,545 397,558 397,598 360,585', view: '375,574 388,568 390,558 397,556 397,585' },
  { hole: '464,585 500,598 500,640 464,625', view: '477,593 490,594 498,603 498,627 477,622' },
  { hole: '690,675 727,690 727,733 690,718', view: '719,712 720,706 726,708 726,716' },
  { hole: '791,715 827,727 827,768 791,755', view: '813,748 820,740 827,738 827,755' },
  { hole: '889,752 926,767 926,808 889,795', view: '916,790 921,784 925,784 925,796' },
  { hole: '987,793 1023,805 1023,848 987,833', view: '996,787 1013,785 1015,803 1023,805 1023,832 1004,822 1004,806 1008,798 996,796' },
];

const sideWindows = [
  '1164,797 1187,780 1187,835 1164,852',
  '1218,748 1241,732 1241,785 1218,802',
  '1270,703 1293,688 1293,742 1270,759',
  '1372,613 1395,598 1395,655 1372,671',
  '1425,568 1448,553 1448,607 1425,623',
  '1475,527 1499,510 1499,562 1475,578',
];

const columns = [
  [746, 300, 370],
  [813, 330, 400],
  [883, 360, 430],
  [950, 388, 460],
  [1017, 418, 490],
];

function Polygons({ list, fill }: { list: string[]; fill: string }) {
  return (
    <g fill={fill}>
      {list.map((points) => (
        <polygon key={points} points={points} />
      ))}
    </g>
  );
}

function Model() {
  return (
    <svg viewBox="-489 -588 2613 1644" className="block h-full w-full" role="img" aria-label="Structure model">
      <defs>
        <linearGradient id="vault" x1="0" y1="0" x2=".7" y2="1">
          <stop offset="0" stopColor="#00009a" />
          <stop offset=".5" stopColor="#0000b0" />
          <stop offset="1" stopColor="#0000dc" />
        </linearGradient>
      </defs>
      <polygon points="33,541 562,107 1634,546 1104,977" fill="#448573" />
      <polygon
        points="111,418 490,69 512,77 512,132 565,148 605,112 615,112 613,100 620,94 622,105 662,118 669,115 669,58 683,45 780,88 1546,435 1546,570 1345,737 1312,765 1113,927 614,716 571,695 111,502"
        fill="#0000a6"
      />
      <polygon points="669,58 675,82 675,115 669,116" fill="#0000e8" />

      <path d={roofStrips.join('')} stroke="#000078" strokeWidth="12" />
      <path d="M118 418 478 88M688 70 1520 436M150 425 330 482 620 582 1090 782" stroke="#000098" strokeWidth="4" fill="none" />
      <g fill="none" stroke="#000090" strokeWidth="6">
        <path d="M345 420 470 342 650 165M420 350 700 455 1000 585M640 150 940 275 1250 400M700 205 1180 410M960 610 1060 650M1000 690 1330 390M480 255 590 180M200 372 330 425" />
        <path d="M255 395c25 5 45 20 60 40M1030 560l100 50M810 660l80-70M1090 600l150-130" />
      </g>
      <path
        d="M676 150 700 112 800 140 830 165 800 200zM845 220l30-30 90 10 30 30-45 40zM1130 345l30-15 130 40-45 60-110-40zM245 435c10-35 50-35 80 15z"
        fill="#0000ae"
      />
      <Polygons list={darkPieces} fill="#00007a" />
      <Polygons list={vaults} fill="url(#vault)" />
      <Polygons list={litWalls} fill="#0000e0" />

      {/* Courtyard */}
      <polygon points="690,232 1175,436 1090,490 780,345 690,300" fill="#000074" />
      <polygon points="545,352 690,232 690,345 645,388 625,382 575,362" fill="#0000e8" />
      <path
        d="M594 370c0-35 10-55 27-62v72zM645 388v-82c4-20 14-34 39-36l1 73 14 2v-48l81 40 305 148 1 8-58 53-188-75z"
        fill="#448573"
      />
      <path d="M670 270l20-20v95l-8 3-12-5z" fill="#000074" />
      <path d="M684 272h14v68l-12 6z" fill="#0000e8" />
      <path d="M621 312l12-4v80l-12-8z" fill="#000074" />
      {columns.map(([x, top, bottom]) => (
        <g key={x}>
          <path d={`M${x} ${top}h12V${bottom + 5}l-12-5z`} fill="#000078" />
          <path d={`M${x + 12} ${top + 4}l10-8V${bottom}l-10 5z`} fill="#0000d8" />
        </g>
      ))}
      <path d="M1098 460l10-14v28l-10 14z" fill="#0000d8" />
      <path d="M1028 548l62-56 45-38 18 8-104 98z" fill="#0000b4" />
      <path d="M640 388 1028 548l-8 14L560 378z" fill="#00008a" />
      <path d="M570 392 1000 570" stroke="#0000b2" strokeWidth="9" strokeDasharray="40 28" />
      <path d="M560 355l18 2-3 8-12-3z" fill="#448573" />

      {/* Front wall */}
      <polygon points="111,418 1113,808 1113,927 614,716 614,667 604,663 604,638 586,630 586,683 571,695 111,502" fill="#000078" />
      <polygon points="571,625 586,631 586,684 571,695" fill="#0000e8" />
      <polygon points="586,630 604,638 604,663 614,667 614,716 586,704" fill="#448573" />
      {frontWindows.map(({ hole, view }) => (
        <g key={hole}>
          <polygon points={hole} fill="#0000e0" />
          <polygon points={view} fill="#448573" />
        </g>
      ))}

      {/* Side wall */}
      <polygon points="1113,808 1546,435 1546,570 1345,737 1312,765 1113,927" fill="#0000e8" />
      <Polygons list={sideWindows} fill="#000078" />
      <polygon points="1312,767 1312,722 1323,718 1323,730 1345,737 1330,757" fill="#448573" />
      <path d="M1323 730v-42l10-16 12 4v61zM1312 722v-18l8-8v22z" fill="#000078" />

      <path d="M786 136h10l8 5M962 214l10 6M1243 344l16 8" stroke="#dfe6f5" strokeWidth="4" fill="none" />
      <path d="M724 540v10M748 552v10M1345 749h10" stroke="#6f8f96" strokeWidth="5" fill="none" />
    </svg>
  );
}

function ViewCube() {
  return (
    <svg viewBox="0 0 54 54" className="absolute top-[2px] left-[2px] h-[54px] w-[54px]" aria-hidden="true">
      <path d="m27 1 26 26-26 26L1 27z" fill="#a3b7d0" stroke="#7f9abd" />
      <path d="m27 8 3 4h-6zM27 46l3-4h-6zM10 27l3-3v6zM44 27l-3-3v6z" fill="#fff" />
      <path d="M12 12h30v30H12z" fill="#7593bb" />
      <path d="M15.500 15.500h23v23h-23z" fill="#849fc4" />
      <path d="M18 18h18v18H18z" fill="#8fa9cb" stroke="#9db4d2" strokeWidth=".7" />
      <path d="M20 20h14v14H20z" fill="#a3b7d2" stroke="#b5c5dc" strokeWidth=".7" />
    </svg>
  );
}

/* ---------- Structure panel ---------- */

const tree = [
  { label: 'Structure', icon: 'cubeGrid', indent: 'pl-[2px]', open: true },
  { label: 'ground', icon: 'slabs', indent: 'pl-[14px]', open: true },
  { label: 'Slab Layers', icon: 'slab', indent: 'pl-[26px]', open: true },
  { label: 'Slab', icon: 'slab', indent: 'pl-[38px]' },
  { label: '8Node Layers', icon: 'brownCube', indent: 'pl-[26px]', open: true },
  { label: '8-Node O', icon: 'brownCube', indent: 'pl-[38px]' },
];

function TreeRow({ label, icon, indent, open }: (typeof tree)[number]) {
  return (
    <li className={clsx('flex h-[10px] items-center', indent)}>
      {open ? (
        <button type="button" aria-label={`Collapse ${label}`} className="flex h-[5px] w-[5px] shrink-0 items-center justify-center border border-[#9a9a9a] bg-white">
          <span className="h-px w-[3px] bg-[#333]" />
        </button>
      ) : (
        <span className="h-[5px] w-[5px] shrink-0 border-b border-l border-dotted border-[#9a9a9a]" />
      )}
      <span className="w-1 shrink-0 border-t border-dotted border-[#9a9a9a]" />
      <label className="flex items-center whitespace-nowrap">
        <span className="relative flex h-2 w-2 shrink-0">
          <input type="checkbox" defaultChecked className="peer h-2 w-2 appearance-none border border-[#8fa6c4] bg-[#f2f6fc]" />
          <svg viewBox="0 0 8 8" className="pointer-events-none absolute inset-0 hidden h-2 w-2 peer-checked:block" fill="none" stroke="#c33a20" strokeWidth="1.300" aria-hidden="true">
            <path d="m2 4 1.500 2L6.500 1.500" />
          </svg>
        </span>
        <span className="flex h-3 w-[14px] shrink-0 items-center">{icons[icon]}</span>
        <span className={clsx(label === 'Structure' && 'bg-[#ececec]')}>{label}</span>
      </label>
    </li>
  );
}

const sections = [
  ['Structure', 'cubeGrid'],
  ['Input Data', 'input'],
  ['Markers', 'markers'],
  ['Solver Controller', 'solver'],
  ['Material Types', 'material'],
  ['Windows', 'windows'],
  ['Scenes', 'scenes'],
  ['Properties', 'properties'],
];

function StructurePanel() {
  return (
    <aside className="flex w-[118px] shrink-0 flex-col border-l border-[#77746c] bg-[#f0f0f0] pr-1 pb-[3px] pl-[2px] text-[7px] leading-[10px] text-[#222]">
      <div className="flex h-[11px] shrink-0 items-center gap-1 pb-[2px]">
        <span className="h-[3px] flex-1 border-y border-[#a5a5a5]" />
        <button type="button" aria-label="Close panel" className="flex h-2 w-[6px] items-center">
          <svg viewBox="0 0 5 5" className="h-[5px] w-[5px]" stroke="#222" strokeWidth="1.300" aria-hidden="true">
            <path d="m0 0 5 5M5 0 0 5" />
          </svg>
        </button>
      </div>
      <h2 className="h-3 shrink-0 border-y border-[#8c8c8c] bg-[#9d9d9d] text-center text-[8px] leading-[10px] font-bold text-[#0c0c2c]">
        Structure
      </h2>

      <div className="flex min-h-0 flex-1 font-['Open_Sans',sans-serif] text-[6px] text-[#111]">
        <div className="flex w-3 shrink-0 flex-col">
          <div className="flex flex-1 flex-col gap-px pt-7">
            {[
              ['ground', 'h-6 bg-white'],
              ['first', 'h-[22px] bg-[#f0f0f0]'],
              ['second floor', 'h-[43px] bg-[#f0f0f0]'],
            ].map(([name, look]) => (
              <button
                key={name}
                type="button"
                className={clsx(
                  'flex w-[11px] rotate-180 items-center justify-center rounded-r-[2px] border border-t-[#555] border-r-[#888] border-b-[#bbb] border-l-[#777] whitespace-nowrap [writing-mode:vertical-rl]',
                  look
                )}
              >
                {name}
              </button>
            ))}
          </div>
          <div className="flex h-5 w-[11px] flex-col">
            {['m2 0 2 3H0z', 'm2 3 2-3H0z'].map((d) => (
              <button key={d} type="button" aria-label="Scroll levels" className="flex flex-1 items-center justify-center border border-white border-r-[#777] border-b-[#777] bg-[#f0f0f0]">
                <svg viewBox="0 0 4 3" className="h-[3px] w-1" aria-hidden="true">
                  <path d={d} fill="#111" />
                </svg>
              </button>
            ))}
          </div>
        </div>

        <div className="flex min-w-0 flex-1 flex-col border-l border-[#77746c]">
          <div className="mt-[3px] flex h-3 w-[42px] items-center gap-[2px] border-t border-r border-[#999] pl-px">
            <span>Levels</span>
            <button type="button" aria-label="Expand levels" className="flex h-2 w-2 items-center justify-center rounded-sm border border-[#7b9cc7] bg-[#dce9f8]">
              <svg viewBox="0 0 6 6" className="h-[6px] w-[6px]" fill="none" stroke="#23508f" aria-hidden="true">
                <path d="m1 0 2 2 2-2M1 3l2 2 2-2" />
              </svg>
            </button>
            <span className="flex h-2 w-2 items-center justify-center border border-[#c9cdd3] bg-[#e4e6e9]">
              <svg viewBox="0 0 6 6" className="h-[6px] w-[6px]" fill="none" stroke="#b3b7bd" aria-hidden="true">
                <path d="m1 3 1.500 2L5 1" />
              </svg>
            </span>
          </div>
          <ul className="min-h-0 flex-1 overflow-hidden border-t border-[#77746c] bg-white">
            {tree.map((node) => (
              <TreeRow key={node.label} {...node} />
            ))}
          </ul>
          <div className="flex h-3 shrink-0 items-center justify-between bg-[#f0f0f0] px-1">
            <svg viewBox="0 0 3 4" className="h-1 w-[3px]" aria-hidden="true">
              <path d="M3 0v4L0 2z" fill="#222" />
            </svg>
            <span className="mr-4 ml-1 flex h-[9px] flex-1 items-center justify-center gap-px rounded-[2px] border border-[#a0a0a0] bg-linear-to-b from-[#fafafa] to-[#dcdcdc]">
              <span className="h-[3px] w-px bg-[#666]" />
              <span className="h-[3px] w-px bg-[#666]" />
              <span className="h-[3px] w-px bg-[#666]" />
            </span>
            <svg viewBox="0 0 3 4" className="h-1 w-[3px]" aria-hidden="true">
              <path d="M0 0v4l3-2z" fill="#222" />
            </svg>
          </div>
        </div>
      </div>

      <nav className="grid h-[84px] shrink-0 grid-rows-8 border-t border-[#444]">
        {sections.map(([label, icon], i) => (
          <button
            key={label}
            type="button"
            className={clsx(
              'flex items-center gap-[2px] overflow-hidden border-b border-[#8f99a6] text-left text-[7px] leading-[9px] font-bold',
              i === 0
                ? 'bg-linear-to-b from-[#b8cde8] to-[#8eacd2] text-[#0b1120]'
                : 'bg-linear-to-b from-[#d3dfee] to-[#b6c8df] text-[#4a525e]'
            )}
          >
            <span className="flex h-[10px] w-[14px] items-center">{icons[icon]}</span>
            {label}
          </button>
        ))}
      </nav>
    </aside>
  );
}

/* ---------- Playback bar ---------- */

function PlaybackBar() {
  return (
    <footer className="flex h-[23px] shrink-0 items-center pl-1 text-[7px] text-black">
      <ToolButton name="stepBack" />
      <div className="mx-[6px] flex h-4 w-[140px] items-center border border-[#aaa69d] border-r-white border-b-white bg-[#c2bfb6] px-[6px]">
        <input
          type="range"
          aria-label="Time"
          min={0}
          max={100}
          defaultValue={50}
          className="h-3 w-full appearance-none bg-transparent [&::-webkit-slider-runnable-track]:h-px [&::-webkit-slider-runnable-track]:bg-[#6f6d66] [&::-webkit-slider-thumb]:-mt-[6px] [&::-webkit-slider-thumb]:h-3 [&::-webkit-slider-thumb]:w-[7px] [&::-webkit-slider-thumb]:appearance-none [&::-webkit-slider-thumb]:border [&::-webkit-slider-thumb]:border-[#9a978f] [&::-webkit-slider-thumb]:bg-[#dedbd4]"
        />
      </div>
      <div className="flex gap-2">
        {['stepForward', 'playBack', 'play', 'pause', 'stop'].map((name) => (
          <ToolButton key={name} name={name} />
        ))}
      </div>
      <input aria-label="Step" defaultValue="1" className="ml-2 h-3 w-[26px] border border-[#77746c] bg-white px-px" />
      <UpDown label="step" className="ml-[2px] w-[10px] border border-[#a8a59d] [&_svg]:h-[2px] [&_svg]:w-1" />
      <input aria-label="Speed" defaultValue="1.00000" className="ml-[7px] h-3 w-[33px] border border-[#1d3266] bg-white px-px" />
      <UpDown label="speed" className="ml-[2px] w-3" />
      <div className="ml-1 flex h-[13px] font-['Open_Sans',sans-serif] text-[6px]">
        <input aria-label="Cursor position" readOnly value="x=-123238.344,y=183279.719,z=-1" className="w-[103px] border border-[#1d3266] bg-[#ece6d6] px-px" />
        <input aria-label="Total time" readOnly value="Total Time = 0.9000005" className="w-[72px] border border-[#1d3266] bg-[#ece6d6] px-px" />
        <input aria-label="Frame" defaultValue="2" className="w-[35px] border border-[#1d3266] bg-white px-px" />
      </div>
      <div className="ml-[2px] flex gap-[2px]">
        {['linkWin', 'playGear', 'playLine'].map((name) => (
          <span key={name} className="border border-[#8f8c84] border-t-white border-l-white bg-[#e2dfd8]">
            <ToolButton name={name} />
          </span>
        ))}
      </div>
    </footer>
  );
}

export default function App() {
  return (
    <div className="flex h-screen flex-col overflow-hidden bg-[#d4d0c8] font-['Liberation_Sans',Arial,sans-serif]">
      <TitleBar />
      <MenuBar />
      <TopToolbar />
      <main className="flex min-h-0 flex-1">
        <div className="flex w-[15px] shrink-0 flex-col pt-px">
          <SideGroup list="pickNode | pickLine | pickGray | pickRound" />
          <SideGroup list="circle diamond square cross plus triangle textTool palette" className="mt-[3px]" />
          <SideGroup list="capture" className="mt-[5px]" />
          <SideGroup list="viewTop viewFront viewBack viewLeft viewBottom plane cubeGrid" className="mt-[3px]" />
        </div>
        <section className="relative min-w-0 flex-1 border-t-2 border-l-2 border-[#8b8983] bg-white">
          <Model />
          <ViewCube />
        </section>
        <div className="flex w-[18px] shrink-0 flex-col pt-px">
          <SideGroup list="redTop redFront redBack redLeft redRight redBottom redLid | rotX rotY rotZ | globe | centerH centerV centerFit | orbit" />
          <SideGroup
            list="axes | hand zoomIn zoomOut zoomBoth zoomCorner zoomFit *zoomWin zoomIcon refresh walk"
            className="mt-2"
          />
        </div>
        <StructurePanel />
      </main>
      <PlaybackBar />
    </div>
  );
}
